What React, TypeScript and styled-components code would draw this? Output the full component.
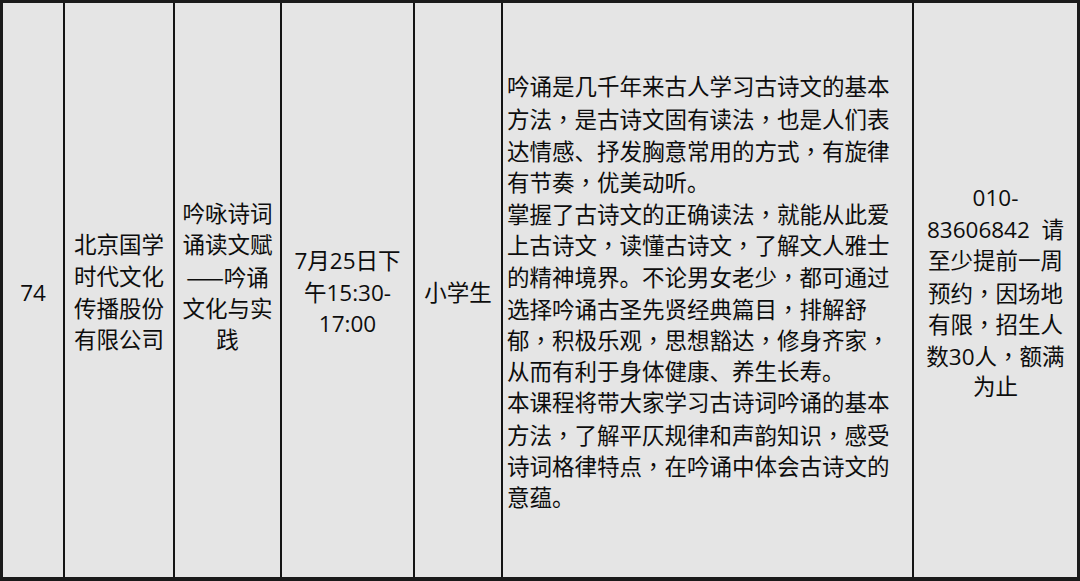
import React from 'react'
import styled, { createGlobalStyle } from 'styled-components'

const GlobalStyle = createGlobalStyle`
    html, body {
        margin: 0;
        padding: 0;
        background: #ffffff;
    }
    body {
        font-family: "Open Sans", "Noto Sans CJK SC", sans-serif;
        color: #0d0d0d;
    }
`

const columns = [
    { key: 'no', lines: ['74'] },
    { key: 'org', lines: ['北京国学', '时代文化', '传播股份', '有限公司'] },
    { key: 'title', lines: ['吟咏诗词', '诵读文赋', '——吟诵', '文化与实', '践', ''] },
    { key: 'time', lines: ['7月25日下', '午15:30-', '17:00'] },
    { key: 'who', lines: ['小学生'] },
]

const description = [
    '吟诵是几千年来古人学习古诗文的基本',
    '方法，是古诗文固有读法，也是人们表',
    '达情感、抒发胸意常用的方式，有旋律',
    '有节奏，优美动听。',
    '掌握了古诗文的正确读法，就能从此爱',
    '上古诗文，读懂古诗文，了解文人雅士',
    '的精神境界。不论男女老少，都可通过',
    '选择吟诵古圣先贤经典篇目，排解舒',
    '郁，积极乐观，思想豁达，修身齐家，',
    '从而有利于身体健康、养生长寿。',
    '本课程将带大家学习古诗词吟诵的基本',
    '方法，了解平仄规律和声韵知识，感受',
    '诗词格律特点，在吟诵中体会古诗文的',
    '意蕴。',
]

const contact = [
    '010-',
    '83606842\u00a0\u00a0请',
    '至少提前一周',
    '预约，因场地',
    '有限，招生人',
    '数30人，额满',
    '为止',
]

// commas are centred in the source, dashes sit at CJK mid height
const renderLine = (line: string) => {
    if (line === '') return '\u00a0'
    const parts = line.split(/(，|——)/)
    return parts.map((part, i) => {
        if (part === '，') return <Comma key={i}>{part}</Comma>
        if (part === '——') return <Dash key={i}>{part}</Dash>
        return <React.Fragment key={i}>{part}</React.Fragment>
    })
}

export default function App() {
    return (
        <>
            <GlobalStyle />
            <Table>
                {columns.map((col) => (
                    <Cell key={col.key}>
                        <Lines>
                            {col.lines.map((line, i) => (
                                <Line key={i}>{renderLine(line)}</Line>
                            ))}
                        </Lines>
                    </Cell>
                ))}
                <Cell $align="left">
                    <Lines>
                        {description.map((line, i) => (
                            <Line key={i}>{renderLine(line)}</Line>
                        ))}
                    </Lines>
                </Cell>
                <Cell $last>
                    <Lines>
                        {contact.map((line, i) => (
                            <Line key={i}>{renderLine(line)}</Line>
                        ))}
                    </Lines>
                </Cell>
            </Table>
        </>
    )
}

const Table = styled.div`
    box-sizing: border-box;
    width: 1080px;
    height: 581px;
    display: grid;
    grid-template-columns: 62px 110px 107px 133px 88px 411px 1fr;
    border: 3px solid #1a1a1a;
    border-bottom-width: 4px;
    background: #e5e5e5;
`

const Cell = styled.div<{ $align?: 'left' | 'center'; $last?: boolean }>`
    box-sizing: border-box;
    display: flex;
    align-items: center;
    justify-content: ${(p) => (p.$align === 'left' ? 'flex-start' : 'center')};
    text-align: ${(p) => (p.$align === 'left' ? 'left' : 'center')};
    padding: ${(p) => (p.$align === 'left' ? '5px 0 0 4px' : '5px 0 0')};
    border-right: ${(p) => (p.$last ? 'none' : '2px solid #141414')};
    font-size: 22.5px;
    line-height: 31.6px;
`

const Lines = styled.div`
    display: flex;
    flex-direction: column;
`

const Line = styled.div`
    height: 31.6px;
    white-space: nowrap;
`

const Comma = styled.span`
    font-family: "Noto Sans CJK TC", sans-serif;
`

const Dash = styled.span`
    font-family: "Noto Sans CJK SC", sans-serif;
`
